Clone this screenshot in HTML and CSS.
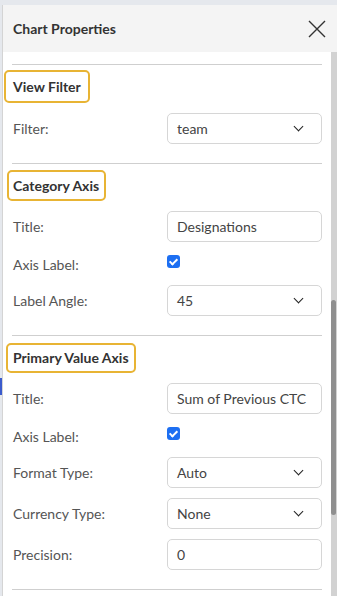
FILE: index.html
```html
<!DOCTYPE html>
<html>
	<head>
		<title>Chart Properties</title>
		<link rel="stylesheet" href="styles.css">
	</head>
	<body>
	<div class="marker"></div>
	<div class="panel">
		<div class="panel-head">
			<span class="panel-title">Chart Properties</span>
			<svg class="close" width="18" height="18" viewBox="0 0 18 18">
				<path d="M1 1 L17 17 M17 1 L1 17" stroke="#333" stroke-width="1.4" fill="none"/>
			</svg>
		</div>
		<div class="panel-body">
			<div class="content">
				<hr class="divider divider-top">
				<div class="heading heading-filter">View Filter</div>
				<div class="row">
					<label>Filter:</label>
					<div class="field select">team<span class="chev"></span></div>
				</div>
				<hr class="divider">

				<div class="heading heading-cat">Category Axis</div>
				<div class="row">
					<label>Title:</label>
					<div class="field">Designations</div>
				</div>
				<div class="row check-row">
					<label>Axis Label:</label>
					<span class="check"></span>
				</div>
				<div class="row">
					<label>Label Angle:</label>
					<div class="field select">45<span class="chev"></span></div>
				</div>
				<hr class="divider">

				<div class="heading heading-val">Primary Value Axis</div>
				<div class="row">
					<label>Title:</label>
					<div class="field">Sum of Previous CTC</div>
				</div>
				<div class="row check-row">
					<label>Axis Label:</label>
					<span class="check"></span>
				</div>
				<div class="row">
					<label>Format Type:</label>
					<div class="field select">Auto<span class="chev"></span></div>
				</div>
				<div class="row">
					<label>Currency Type:</label>
					<div class="field select">None<span class="chev"></span></div>
				</div>
				<div class="row">
					<label>Precision:</label>
					<div class="field">0</div>
				</div>
				<hr class="divider">
			</div>
			<div class="scrollbar"><div class="thumb"></div></div>
		</div>
	</div>
	</body>
</html>
```

FILE: styles.css
```css
html, body {
	margin: 0;
	height: 100%;
	overflow: hidden;
}
body {
	background-color: #e5e8ed;
	font-family: Lato, "Open Sans", sans-serif;
	font-size: 14px;
	color: #555;
}
.marker {
	position: absolute;
	left: 0;
	top: 378px;
	width: 2px;
	height: 17px;
	background-color: #3b5bcc;
}
.panel {
	margin: 5px 0 0 2px;
	height: 591px;
	border-left: 1px solid #d4d4d4;
	background-color: #fff;
	display: flex;
	flex-direction: column;
}
.panel-head {
	height: 47px;
	flex: none;
	background-color: #f4f4f4;
	display: flex;
	align-items: center;
	justify-content: space-between;
	padding: 0 11px 0 10px;
}
.panel-title {
	font-weight: bold;
	color: #333;
	font-size: 14px;
}
.close {
	display: block;
}
.panel-body {
	flex: 1;
	display: flex;
	min-height: 0;
}
.content {
	flex: 1;
	padding: 12px 9px 0 9px;
}
.scrollbar {
	width: 6px;
	background-color: #d2d2d2;
	padding-top: 248px;
}
.thumb {
	width: 5px;
	height: 215px;
	border-radius: 3px;
	background-color: #8f8f8f;
}
.divider {
	border: none;
	border-top: 1px solid #cfcfcf;
	margin: 19px 0 0 0;
}
.divider-top {
	margin-top: 0;
}
.heading {
	display: inline-block;
	font-weight: bold;
	color: #333;
	font-size: 14px;
	border: 2px solid #e8b434;
	border-radius: 5px;
	box-sizing: border-box;
}
.heading-filter {
	margin: 5px 0 0 -8px;
	height: 33px;
	line-height: 29px;
	padding: 0 7px 0 7px;
}
.heading-cat {
	margin: 6px 0 0 -5px;
	height: 31px;
	line-height: 27px;
	padding: 0 5px 0 4px;
}
.heading-val {
	margin: 7px 0 0 -6px;
	height: 30px;
	line-height: 26px;
	padding: 0 5px 0 5px;
}
.row {
	display: flex;
	align-items: center;
	justify-content: space-between;
	margin-top: 10px;
}
.row label {
	padding-left: 1px;
}
.field {
	width: 155px;
	height: 31px;
	box-sizing: border-box;
	border: 1px solid #d6d6d6;
	border-radius: 5px;
	padding: 0 9px;
	display: flex;
	align-items: center;
	justify-content: space-between;
	color: #444;
	font-size: 14px;
}
.chev {
	width: 6px;
	height: 6px;
	border-right: 1.6px solid #222;
	border-bottom: 1.6px solid #222;
	transform: rotate(45deg);
	margin: 0 10px 4px 0;
}
.check-row {
	height: 23px;
	align-items: flex-start;
	line-height: 26px;
}
.check {
	width: 13px;
	height: 13px;
	margin: 3px 142px 0 0;
	border-radius: 3px;
	background-color: #1d6ff2;
	position: relative;
}
.check::after {
	content: "";
	position: absolute;
	left: 4px;
	top: 2px;
	width: 3px;
	height: 6px;
	border-right: 2px solid #fff;
	border-bottom: 2px solid #fff;
	transform: rotate(45deg);
}
```
